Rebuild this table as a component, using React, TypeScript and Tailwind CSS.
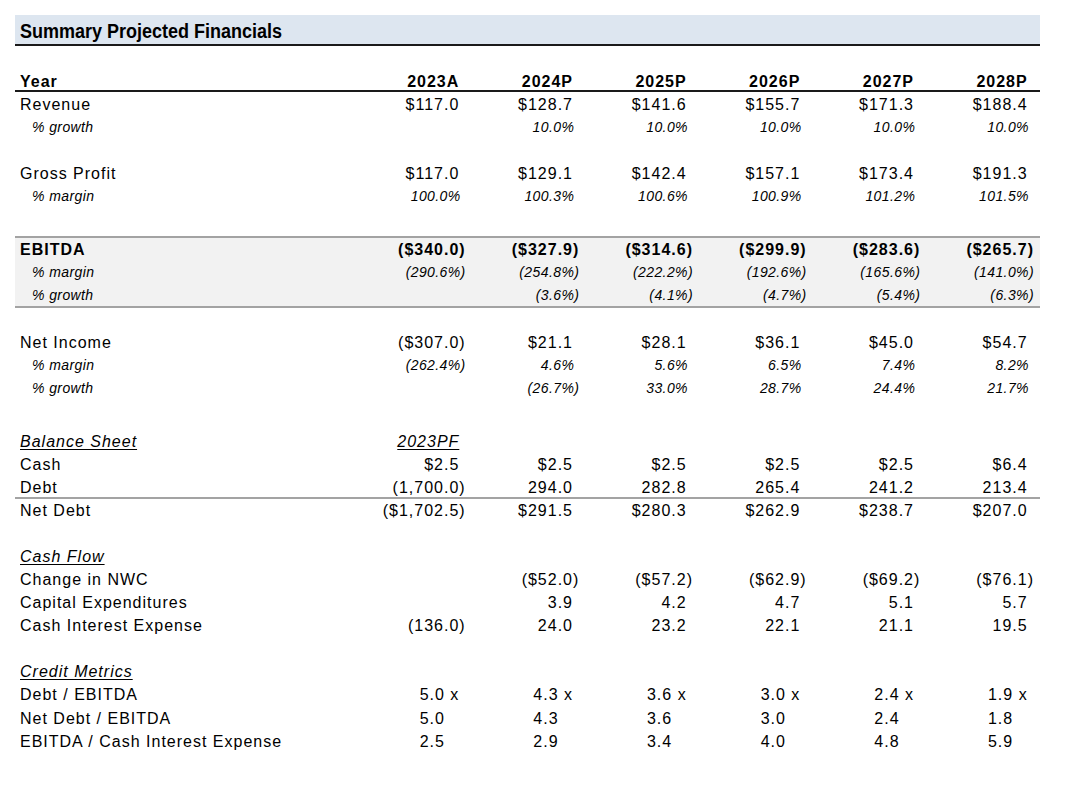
import React from "react";

type Kind = "main" | "sub" | "bold" | "section";

type Row = {
  label: string;
  vals: string[];
  kind: Kind;
  h: number;
  xPad?: boolean;
};

// top of each row is driven by its height, spacers are plain divs
const income: (Row | number)[] = [
  { label: "Revenue", vals: ["$117.0", "$128.7", "$141.6", "$155.7", "$171.3", "$188.4"], kind: "main", h: 23 },
  { label: "% growth", vals: ["", "10.0%", "10.0%", "10.0%", "10.0%", "10.0%"], kind: "sub", h: 23 },
  23,
  { label: "Gross Profit", vals: ["$117.0", "$129.1", "$142.4", "$157.1", "$173.4", "$191.3"], kind: "main", h: 23 },
  { label: "% margin", vals: ["100.0%", "100.3%", "100.6%", "100.9%", "101.2%", "101.5%"], kind: "sub", h: 23 },
  28,
];

const ebitda: Row[] = [
  { label: "EBITDA", vals: ["($340.0)", "($327.9)", "($314.6)", "($299.9)", "($283.6)", "($265.7)"], kind: "bold", h: 23 },
  { label: "% margin", vals: ["(290.6%)", "(254.8%)", "(222.2%)", "(192.6%)", "(165.6%)", "(141.0%)"], kind: "sub", h: 23 },
  { label: "% growth", vals: ["", "(3.6%)", "(4.1%)", "(4.7%)", "(5.4%)", "(6.3%)"], kind: "sub", h: 22 },
];

const netIncome: Row[] = [
  { label: "Net Income", vals: ["($307.0)", "$21.1", "$28.1", "$36.1", "$45.0", "$54.7"], kind: "main", h: 23 },
  { label: "% margin", vals: ["(262.4%)", "4.6%", "5.6%", "6.5%", "7.4%", "8.2%"], kind: "sub", h: 23 },
  { label: "% growth", vals: ["", "(26.7%)", "33.0%", "28.7%", "24.4%", "21.7%"], kind: "sub", h: 23 },
];

const cashFlow: Row[] = [
  { label: "Cash Flow", vals: [], kind: "section", h: 23 },
  { label: "Change in NWC", vals: ["", "($52.0)", "($57.2)", "($62.9)", "($69.2)", "($76.1)"], kind: "main", h: 23 },
  { label: "Capital Expenditures", vals: ["", "3.9", "4.2", "4.7", "5.1", "5.7"], kind: "main", h: 23 },
  { label: "Cash Interest Expense", vals: ["(136.0)", "24.0", "23.2", "22.1", "21.1", "19.5"], kind: "main", h: 23 },
];

const credit: Row[] = [
  { label: "Credit Metrics", vals: [], kind: "section", h: 23 },
  { label: "Debt / EBITDA", vals: ["5.0 x", "4.3 x", "3.6 x", "3.0 x", "2.4 x", "1.9 x"], kind: "main", h: 24 },
  { label: "Net Debt / EBITDA", vals: ["5.0", "4.3", "3.6", "3.0", "2.4", "1.8"], kind: "main", h: 23, xPad: true },
  { label: "EBITDA / Cash Interest Expense", vals: ["2.5", "2.9", "3.4", "4.0", "4.8", "5.9"], kind: "main", h: 23, xPad: true },
];

const grid = "grid grid-cols-[337px_repeat(6,1fr)] pr-[6px]";

const textFor: Record<Kind, string> = {
  main: "text-[16px] tracking-[1px]",
  bold: "text-[16px] tracking-[1px] font-bold",
  sub: "text-[14px] tracking-[0.4px] italic",
  section: "text-[16px] tracking-[1px] italic underline underline-offset-2",
};

function Value({ v, xPad }: { v: string; xPad?: boolean }) {
  if (!v) return null;
  // keep positives lined up with the hanging ")" of negatives
  const hangs = v.endsWith(")");
  return (
    <>
      {v}
      {xPad && <span className="invisible"> x</span>}
      {!hangs && <span className="invisible">)</span>}
    </>
  );
}

function Line({ row, className = "" }: { row: Row; className?: string }) {
  const sub = row.kind === "sub";
  return (
    <div
      className={`${grid} ${textFor[row.kind]} ${className}`}
      style={{ height: row.h, lineHeight: "23px" }}
    >
      <div className={sub ? "pl-[17px]" : "pl-[5px]"}>{row.label}</div>
      {row.vals.map((v, i) => (
        <div key={i} className="text-right whitespace-pre">
          <Value v={v} xPad={row.xPad} />
        </div>
      ))}
    </div>
  );
}

function Block({ items }: { items: (Row | number)[] }) {
  return (
    <>
      {items.map((r, i) =>
        typeof r === "number" ? <div key={i} style={{ height: r }} /> : <Line key={i} row={r} />
      )}
    </>
  );
}

export default function App() {
  return (
    <div className="min-h-screen w-[1090px] h-[800px] bg-white pt-[15px] pl-[15px] text-black font-['Liberation_Sans',Arial,sans-serif]">
      <div className="w-[1025px]">
        {/* title band */}
        <div className="flex items-end h-[31px] pb-[3px] pl-[5px] bg-[#dde6f0] border-b-2 border-[#1a1a1a]">
          <span className="inline-block origin-left scale-x-[0.9] font-bold text-[20px] leading-none">
            Summary Projected Financials
          </span>
        </div>

        {/* year header */}
        <div className="mt-[24px] border-b-2 border-[#1a1a1a]">
          <div className={`${grid} text-[16px] tracking-[1px] font-bold h-[20px] leading-[23px]`}>
            <div className="pl-[5px]">Year</div>
            {["2023A", "2024P", "2025P", "2026P", "2027P", "2028P"].map((y) => (
              <div key={y} className="text-right">
                {y}
                <span className="invisible">)</span>
              </div>
            ))}
          </div>
        </div>
        <div className="h-[1px]" />

        <Block items={income} />

        <div className="bg-[#f2f2f2] border-y-2 border-[#a3a3a3]">
          <Block items={ebitda} />
        </div>

        <div className="h-[23px]" />
        <Block items={netIncome} />
        <div className="h-[30px]" />

        {/* balance sheet */}
        <div className={`${grid} text-[16px] tracking-[1px] italic h-[23px] leading-[23px]`}>
          <div className="pl-[5px]">
            <span className="underline underline-offset-2">Balance Sheet</span>
          </div>
          <div className="text-right">
            <span className="underline underline-offset-2">2023PF</span>
            <span className="invisible">)</span>
          </div>
        </div>
        <Line row={{ label: "Cash", vals: ["$2.5", "$2.5", "$2.5", "$2.5", "$2.5", "$6.4"], kind: "main", h: 23 }} />
        <Line
          row={{ label: "Debt", vals: ["(1,700.0)", "294.0", "282.8", "265.4", "241.2", "213.4"], kind: "main", h: 23 }}
          className="!h-[23px] border-b-2 border-[#a3a3a3]"
        />
        <Line row={{ label: "Net Debt", vals: ["($1,702.5)", "$291.5", "$280.3", "$262.9", "$238.7", "$207.0"], kind: "main", h: 23 }} />

        <div className="h-[23px]" />
        <Block items={cashFlow} />
        <div className="h-[23px]" />
        <Block items={credit} />
      </div>
    </div>
  );
}
